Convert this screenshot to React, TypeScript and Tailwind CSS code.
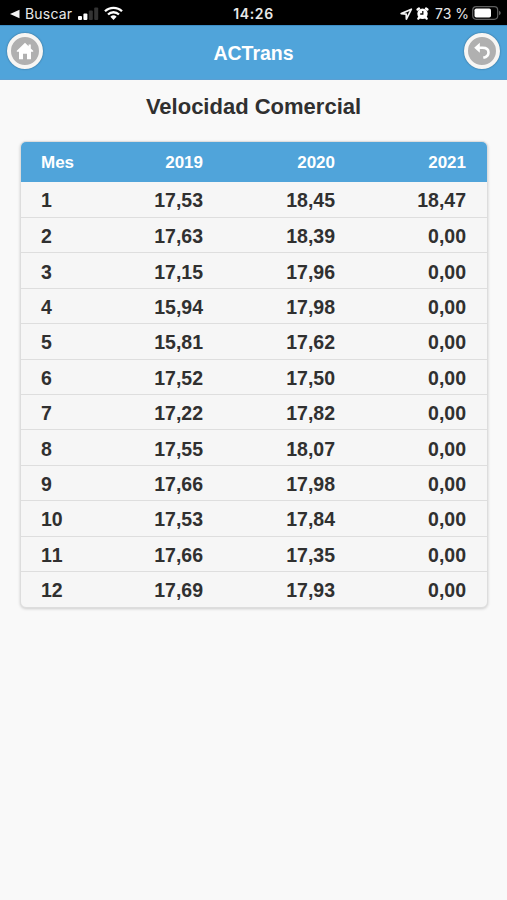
import React from "react";

const rows: string[][] = [
  ["1", "17,53", "18,45", "18,47"],
  ["2", "17,63", "18,39", "0,00"],
  ["3", "17,15", "17,96", "0,00"],
  ["4", "15,94", "17,98", "0,00"],
  ["5", "15,81", "17,62", "0,00"],
  ["6", "17,52", "17,50", "0,00"],
  ["7", "17,22", "17,82", "0,00"],
  ["8", "17,55", "18,07", "0,00"],
  ["9", "17,66", "17,98", "0,00"],
  ["10", "17,53", "17,84", "0,00"],
  ["11", "17,66", "17,35", "0,00"],
  ["12", "17,69", "17,93", "0,00"],
];

function StatusBar() {
  return (
    <div className="grid h-[25px] grid-cols-[1fr_auto_1fr] items-center bg-black pt-[3px] font-['Inter',sans-serif] text-[14px] leading-[20px] text-[#e8e8e8]">
      <div className="flex items-center pl-[10px]">
        <svg width="10" height="10" viewBox="0 0 10 10" fill="#f4f4f4">
          <path d="M0 5 9.5 .8v8.4z" />
        </svg>
        <span className="ml-[5px] w-[49px] whitespace-nowrap tracking-[0.2px]">Buscar</span>
        <svg className="-mt-[2px] ml-[3px]" width="22" height="13" viewBox="0 0 22 13">
          <rect x="1" y="9" width="4" height="4" rx="1" fill="#fff" />
          <rect x="6.4" y="6.5" width="4" height="6.5" rx="1" fill="#fff" />
          <rect x="11.8" y="3.5" width="4" height="9.5" rx="1" fill="#333" />
          <rect x="17.2" y="0.5" width="4" height="12.5" rx="1" fill="#333" />
        </svg>
        <svg className="-mt-[3px] ml-[5px]" width="19" height="14" viewBox="0 0 19 14" fill="none" stroke="#fff" strokeWidth="2.3">
          <path d="M1 5.3a12.2 12.2 0 0 1 17 0M4 8.5a7.9 7.9 0 0 1 11 0" />
          <path d="M6.4 10.8a4.5 4.5 0 0 1 6.2 0L9.5 14z" fill="#fff" stroke="none" />
        </svg>
      </div>
      <span className="text-[14px] font-semibold tracking-[0.6px]">14:26</span>
      <div className="flex items-center justify-end pr-[6px]">
        <svg className="-mt-px" width="13" height="12" viewBox="0 0 13 12" fill="none" stroke="#f4f4f4" strokeWidth="1.7" strokeLinejoin="round">
          <path d="M11.4 1.2 1.2 5.6l5 .5.2 5z" />
        </svg>
        <svg className="-mt-px ml-[3px]" width="13" height="13" viewBox="0 0 13 13">
          <circle cx="6.5" cy="6.8" r="5.2" fill="#fff" />
          <path d="M1.6 2.6 3 1.6M11.4 2.6 10 1.6M2.4 11.6l1.2-1.5M10.6 11.6l-1.2-1.5" stroke="#fff" strokeWidth="2.4" strokeLinecap="round" />
          <path d="M6.8 4v3H4.2" stroke="#111" strokeWidth="1.3" fill="none" />
        </svg>
        <span className="ml-[6px] w-[35px] whitespace-nowrap text-[14px]">73 %</span>
        <svg className="-mt-[2px] ml-[2px]" width="29" height="14" viewBox="0 0 29 14">
          <rect x=".7" y=".7" width="25" height="12.6" rx="3.5" fill="none" stroke="#606060" strokeWidth="1.2" />
          <rect x="2.5" y="2.5" width="16.5" height="9" rx="1.8" fill="#fff" />
          <path d="M27 4.7q1.8.7 1.8 2.3T27 9.3z" fill="#606060" />
        </svg>
      </div>
    </div>
  );
}

function RoundButton({ label, children }: { label: string; children: React.ReactNode }) {
  return (
    <button
      aria-label={label}
      className="-mt-px flex size-[36px] items-center justify-center rounded-full border-[4px] border-[#f7f6f4] bg-[#b0b0b0] shadow-[0_0_2px_rgba(0,0,0,0.4)]"
    >
      {children}
    </button>
  );
}

function Header() {
  return (
    <header className="flex h-[55px] items-center justify-between border-y border-t-[#3c8dc5] border-b-[#5b9fd2] bg-[#50a4da] pr-[7px] pb-[2px] pl-[7px]">
      <RoundButton label="Inicio">
        <svg width="18" height="18" viewBox="0 0 18 18" fill="#fff">
          <path d="M9 .8 12.6 4.2V2.4h2.2v4L17.2 8.8v.9H15v7.6h-4v-5.6H7v5.6H3V9.7H.8v-.9z" />
        </svg>
      </RoundButton>
      <h1 className="pt-[3px] text-[19.5px] leading-[26px] font-bold text-white">ACTrans</h1>
      <RoundButton label="Volver">
        <svg width="18" height="18" viewBox="0 0 18 18" fill="none" stroke="#fff">
          <path d="M5 5.8h4.5c3.8 0 6 1.8 6 4.6 0 2.6-2 4.6-5.2 5.4" strokeWidth="2.6" />
          <path d="M1.2 5.8 6.8.8v10z" fill="#fff" stroke="none" />
        </svg>
      </RoundButton>
    </header>
  );
}

export default function App() {
  return (
    <div className="h-[900px] w-[507px] overflow-hidden bg-[#f9f9f9] font-['Liberation_Sans',Arial,sans-serif] text-[#303030]">
      <StatusBar />
      <Header />
      <main className="pr-[19px] pl-[20px]">
        <h2 className="pt-[13px] pr-px text-center text-[22px] leading-[28px] font-bold">Velocidad Comercial</h2>
        <div className="mt-[20px] overflow-hidden rounded-[6px] border border-[#dddddd] bg-[#f6f6f6] shadow-[0_1px_3px_rgba(0,0,0,0.18)]">
          <table className="-mt-px w-full table-fixed border-collapse font-bold [font-kerning:none]">
            <colgroup>
              <col className="w-[62px]" />
              <col className="w-[120px]" />
              <col className="w-[132px]" />
              <col />
            </colgroup>
            <thead>
              <tr className="h-[41px] bg-[#50a4da] text-[17px] text-white">
                <th className="pt-[2px] pl-[20px] text-left">Mes</th>
                <th className="pt-[2px] text-right">2019</th>
                <th className="pt-[2px] text-right">2020</th>
                <th className="pt-[2px] pr-[21px] text-right">2021</th>
              </tr>
            </thead>
            <tbody>
              {rows.map((r) => (
                <tr key={r[0]} className="h-[35.42px] border-b border-[#dedede] text-[19.5px] leading-[24px] last:border-b-0">
                  <td className="pt-[2px] pl-[20px]">{r[0]}</td>
                  <td className="pt-[2px] text-right">{r[1]}</td>
                  <td className="pt-[2px] text-right">{r[2]}</td>
                  <td className="pt-[2px] pr-[21px] text-right">{r[3]}</td>
                </tr>
              ))}
            </tbody>
          </table>
        </div>
      </main>
    </div>
  );
}
